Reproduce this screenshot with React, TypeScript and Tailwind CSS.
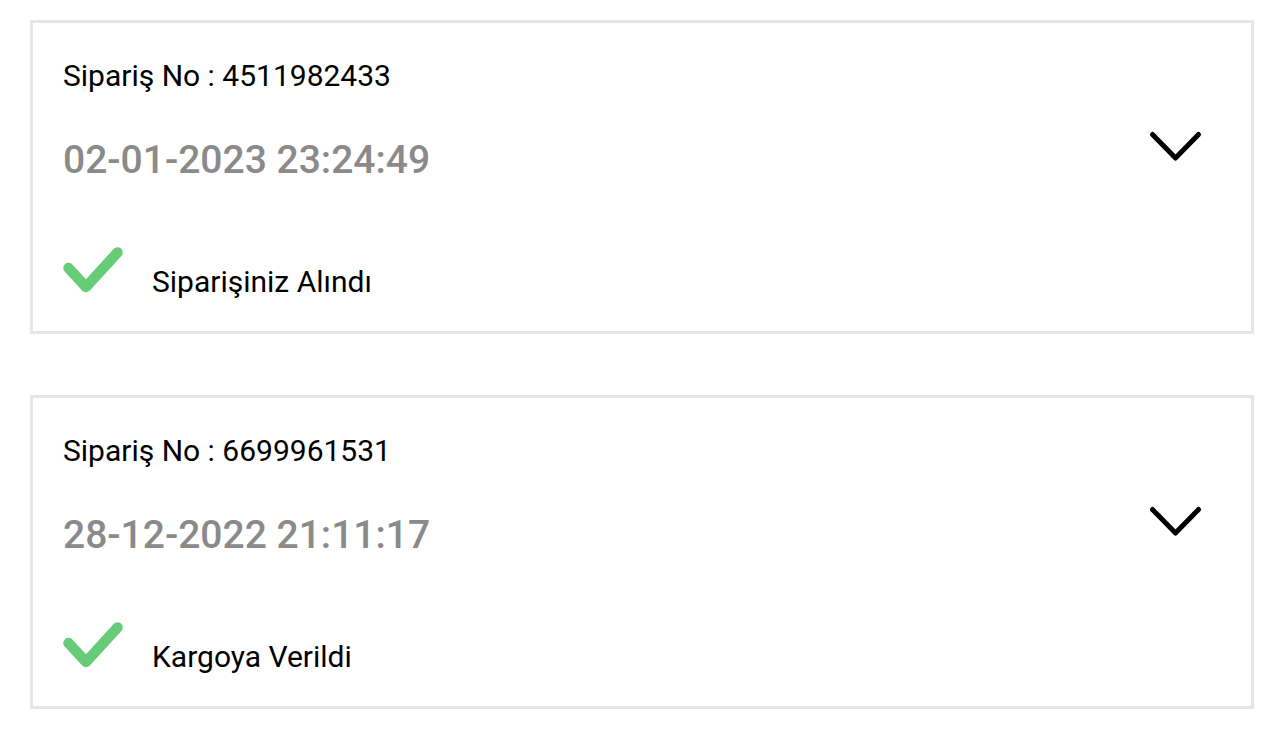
import React from 'react';

type Order = { no: string; date: string; status: string };

const orders: Order[] = [
  { no: '4511982433', date: '02-01-2023 23:24:49', status: 'Siparişiniz Alındı' },
  { no: '6699961531', date: '28-12-2022 21:11:17', status: 'Kargoya Verildi' },
];

function Chevron() {
  return (
    <svg width="56" height="34" viewBox="0 0 56 34" className="shrink-0 mt-[107px]">
      <polyline points="4.5,4.5 27.5,28 50.5,4.5" fill="none" stroke="#000" strokeWidth="5" strokeLinecap="round" strokeLinejoin="round" />
    </svg>
  );
}

function Check() {
  return (
    <svg width="60" height="46" viewBox="0 0 60 46" className="shrink-0">
      <polyline points="5.5,21 23,40 54.5,5.5" fill="none" stroke="#66cc77" strokeWidth="10.5" strokeLinecap="round" strokeLinejoin="round" />
    </svg>
  );
}

function OrderCard({ o }: { o: Order }) {
  return (
    <div className="h-[314px] bg-white border-[3px] border-[#e6e6e6] pl-[30px] pr-[47px] flex flex-col">
      <div className="flex items-start justify-between">
        <div className="flex flex-col">
          <div className="mt-[38px] text-[30px] leading-[30px] text-black">Sipariş No : {o.no}</div>
          <div className="mt-[50px] text-[39px] leading-[39px] font-medium text-[#8a8a8a]">{o.date}</div>
        </div>
        <Chevron />
      </div>
      <div className="mt-[67px] flex items-start">
        <Check />
        <div className="ml-[29px] mt-[20px] text-[30px] leading-[30px] text-black">{o.status}</div>
      </div>
    </div>
  );
}

export default function App() {
  return (
    <div className="min-h-screen bg-white px-[30px] pt-[20px] flex flex-col gap-[61px] font-['Roboto',sans-serif]">
      {orders.map(o => <OrderCard key={o.no} o={o} />)}
    </div>
  );
}
